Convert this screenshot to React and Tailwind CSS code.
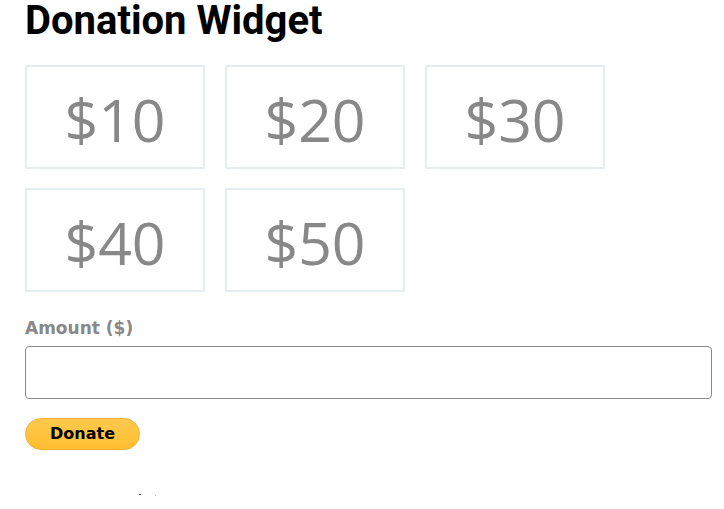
export default function App() {
  const amounts = ["$10", "$20", "$30", "$40", "$50"];
  return (
    <div className="w-[724px] h-[509px] bg-white pl-[25px] pr-[12px] relative overflow-hidden">
      <h1 className="text-[40px] leading-[40px] font-bold text-black font-['Roboto',sans-serif] pt-[1px]">
        Donation Widget
      </h1>
      <div className="grid grid-cols-[180px_180px_180px] gap-x-[20px] gap-y-[19px] mt-[24px]">
        {amounts.map((a) => (
          <div
            key={a}
            className="h-[104px] border-2 border-[#e6edf0] flex items-center justify-center text-[#888888] text-[59px] font-['Open_Sans',sans-serif] leading-none pt-[4px]"
          >
            {a}
          </div>
        ))}
      </div>
      <div className="mt-[24px] text-[#888888] font-bold text-[17px] leading-[24px] font-['DejaVu_Sans',sans-serif]">
        Amount ($)
      </div>
      <input
        type="text"
        className="block mt-[6px] w-[687px] h-[53px] border border-[#8a8a8a] rounded-[4px] bg-white"
      />
      <button className="mt-[19px] w-[115px] h-[32px] rounded-full bg-gradient-to-b from-[#ffc94d] to-[#ffbe2e] border border-[#f2b233] text-black font-bold text-[16px] font-['DejaVu_Sans',sans-serif] flex items-center justify-center leading-none">
        Donate
      </button>
      <div className="absolute left-[139px] top-[494px] w-[2px] h-[1px] bg-[#2a4a6a]" />
      <div className="absolute left-[155px] top-[495px] w-[1px] h-[1px] bg-[#9cd0f0]" />
    </div>
  );
}
